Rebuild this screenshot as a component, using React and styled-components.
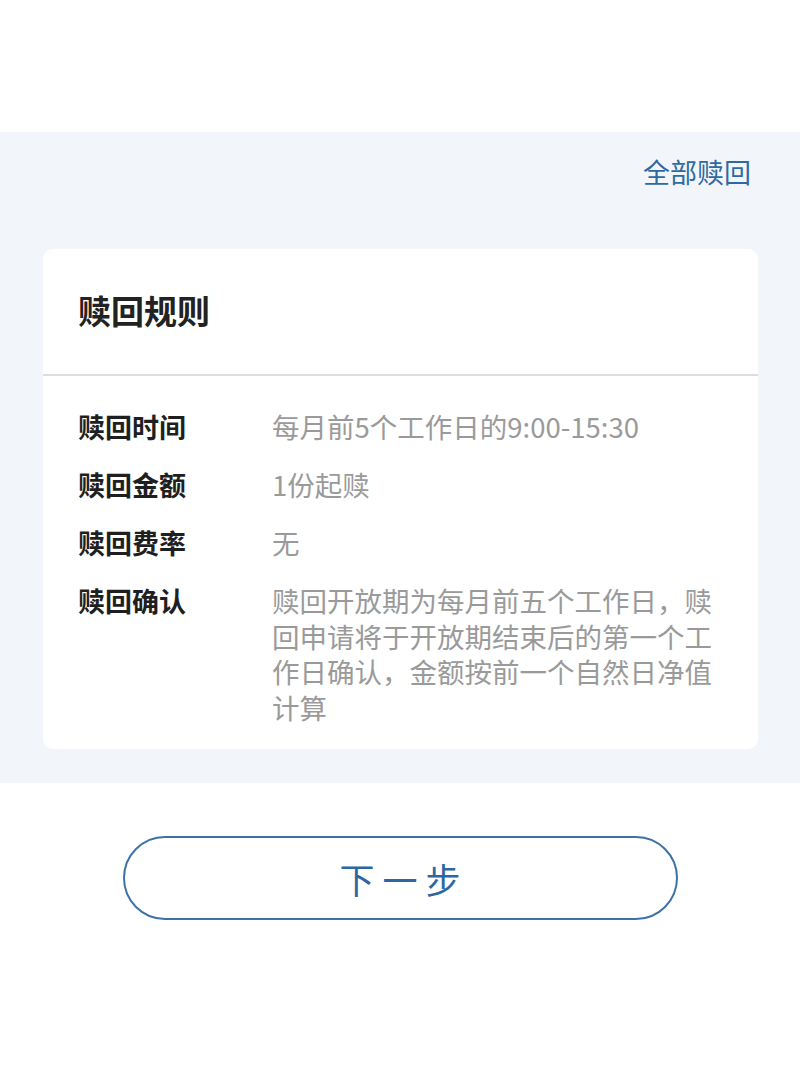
import React from "react"
import styled, { createGlobalStyle } from "styled-components"

const GlobalStyle = createGlobalStyle`
  html, body {
    margin: 0;
    padding: 0;
    background: #fff;
    font-family: "Noto Sans CJK SC", "Noto Sans", sans-serif;
  }
`

const rules = [
  { label: "赎回时间", value: "每月前5个工作日的9:00-15:30" },
  { label: "赎回金额", value: "1份起赎" },
  { label: "赎回费率", value: "无" },
  {
    label: "赎回确认",
    value: "赎回开放期为每月前五个工作日，赎回申请将于开放期结束后的第一个工作日确认，金额按前一个自然日净值计算",
  },
]

const App = () => {
  return (
    <Page>
      <GlobalStyle />
      <TopSpace />
      <Panel>
        <ActionBar>
          <TextLink>全部赎回</TextLink>
        </ActionBar>
        <Card>
          <CardTitle>赎回规则</CardTitle>
          <RuleList>
            {rules.map((r) => (
              <RuleRow key={r.label}>
                <RuleLabel>{r.label}</RuleLabel>
                <RuleValue>{r.value}</RuleValue>
              </RuleRow>
            ))}
          </RuleList>
        </Card>
      </Panel>
      <Footer>
        <NextButton>下一步</NextButton>
      </Footer>
    </Page>
  )
}

const Page = styled.div`
  width: 800px;
  min-height: 1067px;
  background: #fff;
`

const TopSpace = styled.div`
  height: 132px;
`

const Panel = styled.section`
  background: #f2f6fa;
  padding: 0 42px 34px 43px;
`

const ActionBar = styled.div`
  display: flex;
  justify-content: flex-end;
  height: 117px;
  padding: 22px 7px 0 0;
  box-sizing: border-box;
`

const TextLink = styled.a`
  font-size: 27px;
  line-height: 36px;
  color: #2e69a4;
  cursor: pointer;
`

const Card = styled.div`
  background: #fff;
  border-radius: 10px;
  padding-bottom: 24px;
`

const CardTitle = styled.h2`
  margin: 0;
  height: 127px;
  box-sizing: border-box;
  padding: 38px 35px 0;
  font-size: 33px;
  font-weight: 700;
  line-height: 46px;
  color: #222;
  border-bottom: 2px solid #dedede;
`

const RuleList = styled.div`
  display: flex;
  flex-direction: column;
  gap: 22px;
  padding: 33px 35px 0;
`

const RuleRow = styled.div`
  display: grid;
  grid-template-columns: 194px 452px;
  align-items: start;
`

const RuleLabel = styled.span`
  font-size: 27px;
  font-weight: 700;
  line-height: 36px;
  color: #1f1f1f;
`

const RuleValue = styled.span`
  font-size: 27.5px;
  line-height: 35.5px;
  color: #9a9a9a;
`

const Footer = styled.div`
  display: flex;
  justify-content: center;
  padding-top: 53px;
`

const NextButton = styled.button`
  width: 555px;
  height: 84px;
  border: 2px solid #3d72a8;
  border-radius: 42px;
  background: #fff;
  color: #2d67a3;
  font-family: "Noto Sans CJK SC", sans-serif;
  font-size: 35px;
  letter-spacing: 8px;
  text-indent: 8px;
  cursor: pointer;
`

export default App
